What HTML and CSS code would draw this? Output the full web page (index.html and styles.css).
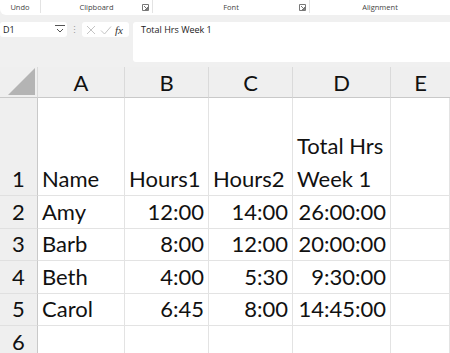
FILE: index.html
```html
<!DOCTYPE html>
<html lang="en">
<head>
    <meta charset="UTF-8">
    <title>Sheet</title>
    <link rel="stylesheet" href="styles.css">
</head>
<body>
    <div class="ribbon">
        <div class="group g-undo">Undo</div>
        <div class="group g-clip">Clipboard<span class="launcher"><svg width="7" height="7" viewBox="0 0 7 7"><path d="M0.5 0.5h6v6h-6z" fill="none" stroke="#777" stroke-width="1"/><path d="M2 2l3.5 3.5M5.5 3v2.5H3" fill="none" stroke="#777" stroke-width="1"/></svg></span></div>
        <div class="group g-font">Font<span class="launcher"><svg width="7" height="7" viewBox="0 0 7 7"><path d="M0.5 0.5h6v6h-6z" fill="none" stroke="#777" stroke-width="1"/><path d="M2 2l3.5 3.5M5.5 3v2.5H3" fill="none" stroke="#777" stroke-width="1"/></svg></span></div>
        <div class="group g-align">Alignment</div>
    </div>
    <div class="formula-row">
        <div class="name-box">D1
            <svg class="chev" width="10" height="10" viewBox="0 0 10 10"><path d="M0 1.5h10" stroke="#555" stroke-width="1"/><path d="M2 5l3 3 3-3" fill="none" stroke="#555" stroke-width="1"/></svg>
        </div>
        <div class="dots">⋮</div>
        <div class="fx-box">
            <svg width="12" height="12" viewBox="0 0 12 12"><path d="M2 2l8 8M10 2l-8 8" stroke="#c4c4c4" stroke-width="1"/></svg>
            <svg width="12" height="12" viewBox="0 0 12 12"><path d="M1 6.5l3.5 3.5L11 2.5" fill="none" stroke="#c4c4c4" stroke-width="1"/></svg>
            <span class="fx">fx</span>
        </div>
        <div class="formula-bar">Total Hrs Week 1</div>
    </div>
    <div class="sheet">
        <div class="hd corner"><span class="tri"></span></div>
        <div class="hd">A</div>
        <div class="hd">B</div>
        <div class="hd">C</div>
        <div class="hd">D</div>
        <div class="hd last">E</div>

        <div class="rn tall">1</div>
        <div class="c tall">Name</div>
        <div class="c tall">Hours1</div>
        <div class="c tall">Hours2</div>
        <div class="c tall wrap">Total Hrs<br>Week 1</div>
        <div class="c tall"></div>

        <div class="rn">2</div>
        <div class="c">Amy</div>
        <div class="c num">12:00</div>
        <div class="c num">14:00</div>
        <div class="c num">26:00:00</div>
        <div class="c"></div>

        <div class="rn">3</div>
        <div class="c">Barb</div>
        <div class="c num">8:00</div>
        <div class="c num">12:00</div>
        <div class="c num">20:00:00</div>
        <div class="c"></div>

        <div class="rn">4</div>
        <div class="c">Beth</div>
        <div class="c num">4:00</div>
        <div class="c num">5:30</div>
        <div class="c num">9:30:00</div>
        <div class="c"></div>

        <div class="rn">5</div>
        <div class="c">Carol</div>
        <div class="c num">6:45</div>
        <div class="c num">8:00</div>
        <div class="c num">14:45:00</div>
        <div class="c"></div>

        <div class="rn">6</div>
        <div class="c"></div>
        <div class="c"></div>
        <div class="c"></div>
        <div class="c"></div>
        <div class="c"></div>
    </div>
</body>
</html>
```

FILE: styles.css
```css
body {
    margin: 0;
    width: 450px;
    height: 353px;
    overflow: hidden;
    background: #f0f0f0;
    font-family: 'Lato', sans-serif;
}
.ribbon {
    display: flex;
    height: 15px;
    background: #fff;
    border-bottom-left-radius: 6px;
    font-family: 'Open Sans', sans-serif;
    font-size: 7.5px;
    color: #444;
}
.group { position: relative; display: flex; align-items: center; justify-content: center; height: 13px; border-right: 1px solid #e3e3e3; }
.g-undo { width: 40px; }
.g-clip { width: 111px; }
.g-font { width: 156px; }
.g-align { flex: 1; border-right: none; }
.launcher { position: absolute; right: 3px; top: 4px; width: 7px; height: 7px; display: flex; }
.formula-row { display: flex; align-items: flex-start; margin-top: 7px; height: 40px; }
.name-box { width: 67px; height: 15px; box-sizing: border-box; background: #fff; border-radius: 3px; font-family: 'Open Sans', sans-serif; font-size: 9px; padding: 1px 3px; position: relative; color: #222; }
.chev { position: absolute; right: 2px; top: 2px; }
.dots { width: 15px; text-align: center; color: #999; font-size: 9px; line-height: 15px; }
.fx-box { width: 47px; height: 15px; background: #fff; border-radius: 3px; display: flex; align-items: center; gap: 3px; padding-left: 3px; box-sizing: border-box; }
.fx { font-family: 'Liberation Serif', serif; font-style: italic; font-size: 11px; color: #333; }
.formula-bar { margin-left: 4px; flex: 1; height: 40px; background: #fff; border-top-left-radius: 3px; border-bottom-left-radius: 3px; box-sizing: border-box; padding: 1px 8px; font-family: 'Open Sans', sans-serif; font-size: 9px; color: #222; }
.sheet {
    margin-top: 5px;
    display: grid;
    grid-template-columns: 38px 87px 84px 84px 98px 59px;
    grid-template-rows: 31px 98px repeat(5, 32.5px);
    background: #fff;
    font-size: 22px;
}
.hd { background: #efefef; border-bottom: 1px solid #c9c9c9; border-right: 1px solid #dadada; display: flex; align-items: center; justify-content: center; color: #111; }
.hd.last { border-right: none; }
.corner { position: relative; }
.tri { position: absolute; right: 2px; bottom: 2px; width: 0; height: 0; border-left: 27px solid transparent; border-bottom: 27px solid #b4b4b4; }
.rn { background: #efefef; border-right: 1px solid #c9c9c9; border-bottom: 1px solid #e0e0e0; display: flex; align-items: flex-end; justify-content: center; padding-bottom: 0; box-sizing: border-box; line-height: 32px; color: #111; }
.c { border-right: 1px solid #e3e3e3; border-bottom: 1px solid #e3e3e3; display: flex; align-items: flex-end; padding: 0 4px; box-sizing: border-box; line-height: 32px; color: #111; white-space: nowrap; }
.c.num { justify-content: flex-end; }
.c.wrap { line-height: 33px; }
```
